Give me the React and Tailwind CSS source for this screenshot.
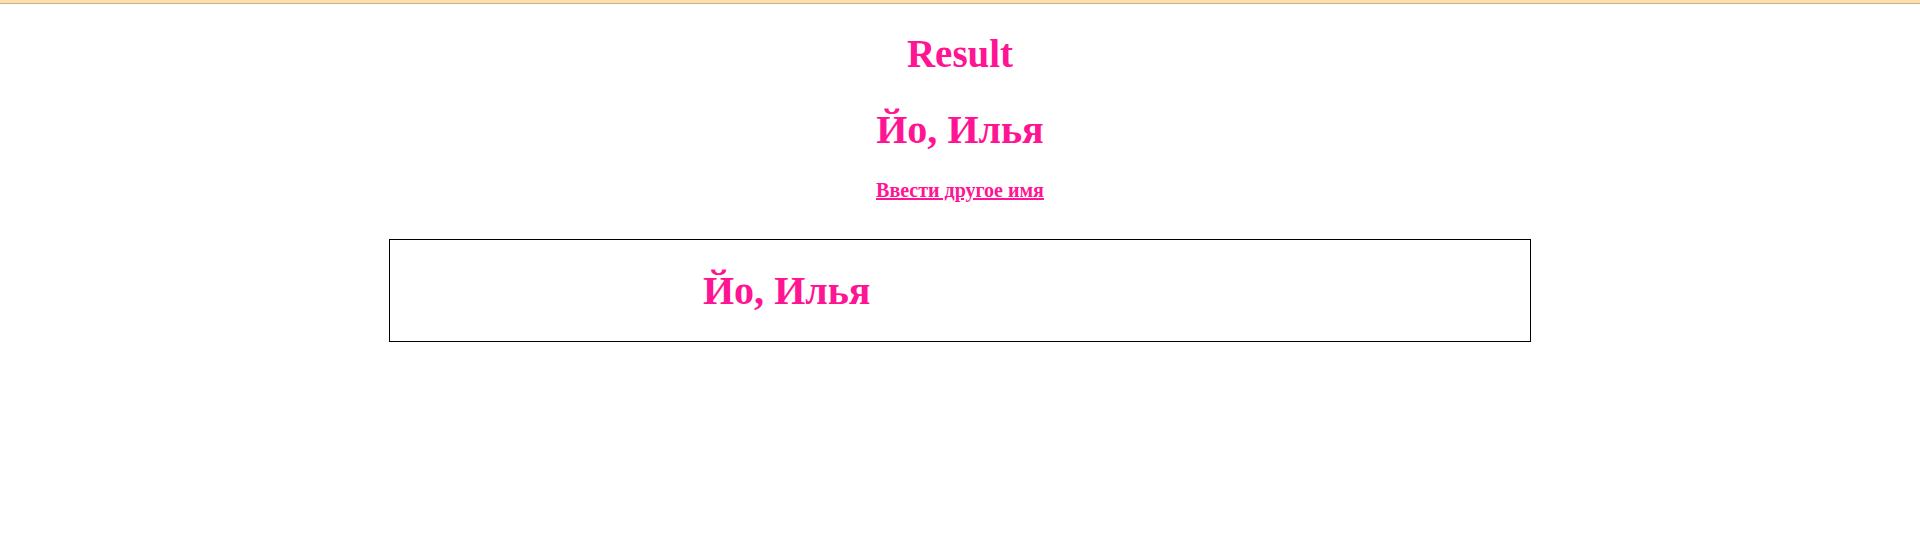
import React from 'react';

const App = () => {
  const name = 'Илья';

  return (
    <div className="min-h-screen bg-white font-['Liberation_Serif',serif] text-[#ff1493]">
      {/* top strip */}
      <div className="h-[4px] bg-[#ffdead] border-b border-[#c4b49c]"></div>

      <h1 className="mt-[27px] text-center text-[39px] font-bold leading-[46px]">Result</h1>
      <h2 className="mt-[28px] text-center text-[40px] font-bold leading-[50px]">Йо, {name}</h2>

      <div className="mt-[23px] text-center text-[20px] font-bold leading-[24px]">
        <a href="#" className="underline">
          Ввести другое имя
        </a>
      </div>

      <div className="mx-auto mt-[37px] h-[103px] w-[1142px] border border-black pl-[313px] pt-[26px]">
        <div className="text-[40px] font-bold leading-[50px]">Йо, {name}</div>
      </div>
    </div>
  );
};

export default App;
